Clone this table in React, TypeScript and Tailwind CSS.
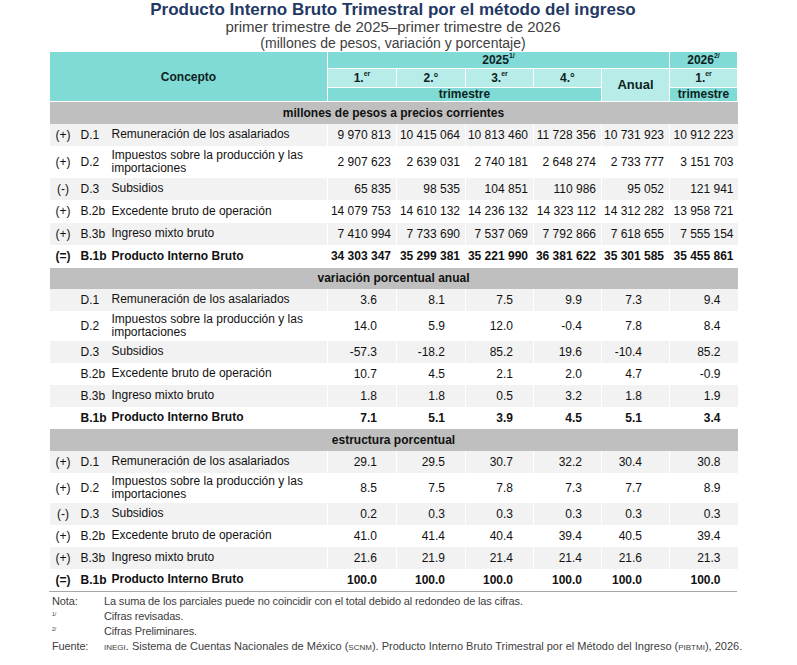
type Row = {
  sign: string;
  code: string;
  label: string;
  values: string[];
  bold?: boolean;
};

type Section = {
  title: string;
  kind: "abs" | "pct";
  rows: Row[];
};

const absPad = ["pr-[5px]", "pr-[5px]", "pr-[5px]", "pr-[5px]", "pr-[5px]", "pr-[4px]"];
const pctPad = ["pr-[19px]", "pr-[20px]", "pr-[20px]", "pr-[19px]", "pr-[27px]", "pr-[17px]"];

const IMPUESTOS = "Impuestos sobre la producción y las importaciones";

const sections: Section[] = [
  {
    title: "millones de pesos a precios corrientes",
    kind: "abs",
    rows: [
      { sign: "(+)", code: "D.1", label: "Remuneración de los asalariados", values: ["9 970 813", "10 415 064", "10 813 460", "11 728 356", "10 731 923", "10 912 223"] },
      { sign: "(+)", code: "D.2", label: IMPUESTOS, values: ["2 907 623", "2 639 031", "2 740 181", "2 648 274", "2 733 777", "3 151 703"] },
      { sign: "(-)", code: "D.3", label: "Subsidios", values: ["65 835", "98 535", "104 851", "110 986", "95 052", "121 941"] },
      { sign: "(+)", code: "B.2b", label: "Excedente bruto de operación", values: ["14 079 753", "14 610 132", "14 236 132", "14 323 112", "14 312 282", "13 958 721"] },
      { sign: "(+)", code: "B.3b", label: "Ingreso mixto bruto", values: ["7 410 994", "7 733 690", "7 537 069", "7 792 866", "7 618 655", "7 555 154"] },
      { sign: "(=)", code: "B.1b", label: "Producto Interno Bruto", values: ["34 303 347", "35 299 381", "35 221 990", "36 381 622", "35 301 585", "35 455 861"], bold: true },
    ],
  },
  {
    title: "variación porcentual anual",
    kind: "pct",
    rows: [
      { sign: "", code: "D.1", label: "Remuneración de los asalariados", values: ["3.6", "8.1", "7.5", "9.9", "7.3", "9.4"] },
      { sign: "", code: "D.2", label: IMPUESTOS, values: ["14.0", "5.9", "12.0", "-0.4", "7.8", "8.4"] },
      { sign: "", code: "D.3", label: "Subsidios", values: ["-57.3", "-18.2", "85.2", "19.6", "-10.4", "85.2"] },
      { sign: "", code: "B.2b", label: "Excedente bruto de operación", values: ["10.7", "4.5", "2.1", "2.0", "4.7", "-0.9"] },
      { sign: "", code: "B.3b", label: "Ingreso mixto bruto", values: ["1.8", "1.8", "0.5", "3.2", "1.8", "1.9"] },
      { sign: "", code: "B.1b", label: "Producto Interno Bruto", values: ["7.1", "5.1", "3.9", "4.5", "5.1", "3.4"], bold: true },
    ],
  },
  {
    title: "estructura porcentual",
    kind: "pct",
    rows: [
      { sign: "(+)", code: "D.1", label: "Remuneración de los asalariados", values: ["29.1", "29.5", "30.7", "32.2", "30.4", "30.8"] },
      { sign: "(+)", code: "D.2", label: IMPUESTOS, values: ["8.5", "7.5", "7.8", "7.3", "7.7", "8.9"] },
      { sign: "(-)", code: "D.3", label: "Subsidios", values: ["0.2", "0.3", "0.3", "0.3", "0.3", "0.3"] },
      { sign: "(+)", code: "B.2b", label: "Excedente bruto de operación", values: ["41.0", "41.4", "40.4", "39.4", "40.5", "39.4"] },
      { sign: "(+)", code: "B.3b", label: "Ingreso mixto bruto", values: ["21.6", "21.9", "21.4", "21.4", "21.6", "21.3"] },
      { sign: "(=)", code: "B.1b", label: "Producto Interno Bruto", values: ["100.0", "100.0", "100.0", "100.0", "100.0", "100.0"], bold: true },
    ],
  },
];

const Ord = ({ n, s }: { n: string; s: string }) => (
  <span>
    {n}
    <sup className="text-[7px] align-[3px] leading-none">{s}</sup>
  </span>
);

const DataRow = ({ row, index, kind, first }: { row: Row; index: number; kind: "abs" | "pct"; first: boolean }) => {
  const tall = row.code === "D.2";
  const bg = index % 2 === 0 ? "bg-[#f2f2f2]" : "bg-white";
  const pads = kind === "abs" ? absPad : pctPad;
  let height = "h-[22px]";
  if (tall) height = first ? "h-[32px]" : "h-[30px]";
  else if (first && index % 2 === 1) height = "h-[23px]";
  return (
    <tr className={`${bg} ${height} ${row.bold ? "font-bold" : ""}`}>
      <td className="text-center p-0">{row.sign}</td>
      <td className="pl-[4px] p-0">{row.code}</td>
      <td className="pl-[3px] pr-[14px] p-0 leading-[13px]">{row.label}</td>
      {row.values.map((v, i) => (
        <td key={i} className={`border-l border-white text-right whitespace-nowrap p-0 ${pads[i]}`}>
          {v}
        </td>
      ))}
    </tr>
  );
};

export default function App() {
  return (
    <div className="w-[797px] h-[665px] bg-white font-['Liberation_Sans',Arial,sans-serif] text-[#111]">
      <div className="ml-[49px] w-[688px]">
        <div className="flex flex-col items-center">
          <h1 className="text-[17px] leading-[19px] font-bold text-[#1f3864]">
            Producto Interno Bruto Trimestral por el método del ingreso
          </h1>
          <p className="text-[15px] leading-[16px] text-[#404040]">
            primer trimestre de 2025–primer trimestre de 2026
          </p>
          <p className="text-[14px] leading-[16px] text-[#404040]">
            (millones de pesos, variación y porcentaje)
          </p>
        </div>

        <table className="w-[688px] table-fixed border-collapse text-[12px] leading-[14px]">
          <colgroup>
            <col className="w-[27px]" />
            <col className="w-[32px]" />
            <col className="w-[219px]" />
            <col className="w-[69px]" />
            <col className="w-[69px]" />
            <col className="w-[68px]" />
            <col className="w-[68px]" />
            <col className="w-[68px]" />
            <col className="w-[68px]" />
          </colgroup>
          <thead className="font-bold text-[#0f1f1f]">
            <tr className="h-[17px]">
              <th colSpan={3} rowSpan={3} className="bg-[#80dbd6] border border-white p-0">
                Concepto
              </th>
              <th colSpan={5} className="bg-[#80dbd6] border border-white p-0">
                <Ord n="2025" s="1/" />
              </th>
              <th className="bg-[#80dbd6] border border-white p-0">
                <Ord n="2026" s="2/" />
              </th>
            </tr>
            <tr className="h-[19px]">
              <th className="bg-[#b8ece9] border border-white p-0">
                <Ord n="1." s="er" />
              </th>
              <th className="bg-[#b8ece9] border border-white p-0">2.°</th>
              <th className="bg-[#b8ece9] border border-white p-0">
                <Ord n="3." s="er" />
              </th>
              <th className="bg-[#b8ece9] border border-white p-0">4.°</th>
              <th rowSpan={2} className="bg-[#b8ece9] border border-white p-0 text-[13px]">
                Anual
              </th>
              <th className="bg-[#b8ece9] border border-white p-0">
                <Ord n="1." s="er" />
              </th>
            </tr>
            <tr className="h-[14px]">
              <th colSpan={4} className="bg-[#80dbd6] border border-white p-0 leading-[13px]">
                trimestre
              </th>
              <th className="bg-[#80dbd6] border border-white p-0 leading-[13px]">trimestre</th>
            </tr>
          </thead>
          {sections.map((s, si) => (
            <tbody key={s.title}>
              <tr className={si === 1 ? "h-[21px]" : "h-[22px]"}>
                <td colSpan={9} className="bg-[#bfbfbf] text-center font-bold p-0">
                  {s.title}
                </td>
              </tr>
              {s.rows.map((r, ri) => (
                <DataRow key={r.code} row={r} index={ri} kind={s.kind} first={si === 0} />
              ))}
            </tbody>
          ))}
        </table>
        <div className="h-px bg-[#a6a6a6]" />

        <div className="mt-[2px] grid grid-cols-[52px_1fr] text-[11px] leading-[15px] tracking-[-0.15px] text-[#404040] pl-[3px]">
          <span>Nota:</span>
          <span>La suma de los parciales puede no coincidir con el total debido al redondeo de las cifras.</span>
          <span className="text-[7px] leading-[15px]">
            <sup>1/</sup>
          </span>
          <span>Cifras revisadas.</span>
          <span className="text-[7px] leading-[15px]">
            <sup>2/</sup>
          </span>
          <span>Cifras Preliminares.</span>
          <span>Fuente:</span>
          <span className="whitespace-nowrap tracking-normal">
            <span className="text-[8px]">INEGI</span>. Sistema de Cuentas Nacionales de México (
            <span className="text-[8px]">SCNM</span>). Producto Interno Bruto Trimestral por el Método del Ingreso (
            <span className="text-[8px]">PIBTMI</span>), 2026.
          </span>
        </div>
      </div>
    </div>
  );
}
